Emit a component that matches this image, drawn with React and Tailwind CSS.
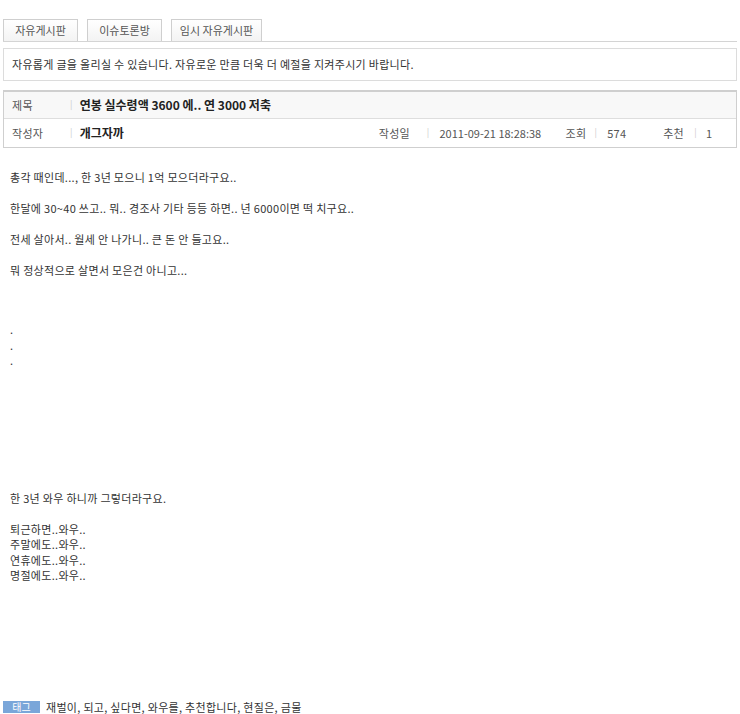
import React from "react";

const F = { fontFamily: '"Noto Sans CJK KR", "Noto Sans", sans-serif' };

export default function App() {
  return (
    <div className="w-[740px] h-[714px] overflow-hidden bg-white text-[11px] tracking-[0.3px] text-[#444]" style={F}>
      <div className="pt-[19px] px-[3px]">
        <div className="flex items-end gap-[9px] border-b border-[#d4d4d4]">
          <div className="w-[75px] h-[22px] flex items-center justify-center border border-b-0 border-[#cfcfcf] bg-gradient-to-b from-white to-[#f3f3f3] text-[#555] tracking-normal">자유게시판</div>
          <div className="w-[75px] h-[22px] flex items-center justify-center border border-b-0 border-[#cfcfcf] bg-gradient-to-b from-white to-[#f3f3f3] text-[#555] tracking-normal">이슈토론방</div>
          <div className="w-[91px] h-[22px] flex items-center justify-center border border-b-0 border-[#cfcfcf] bg-gradient-to-b from-white to-[#f3f3f3] text-[#555] tracking-normal">임시 자유게시판</div>
        </div>
        <div className="mt-[6px] h-[33px] border border-[#dcdcdc] flex items-center pl-[8px] text-[#333]">
          자유롭게 글을 올리실 수 있습니다. 자유로운 만큼 더욱 더 예절을 지켜주시기 바랍니다.
        </div>
        <div className="mt-[9px] border border-[#cfcfcf] border-t-2">
          <div className="h-[27px] bg-[#f8f8f8] border-b border-[#dedede] flex items-center">
            <div className="w-[66px] pl-[8px] text-[#555]">제목</div>
            <div className="text-[#ccc] text-[9px]">|</div>
            <div className="pl-[7px] text-[12px] font-bold text-[#222] tracking-normal">연봉 실수령액 3600 에.. 연 3000 저축</div>
          </div>
          <div className="h-[28px] flex items-center">
            <div className="w-[66px] pl-[8px] text-[#555]">작성자</div>
            <div className="text-[#ccc] text-[9px]">|</div>
            <div className="pl-[7px] text-[12px] font-bold text-[#222] w-[306px] tracking-normal">개그자까</div>
            <div className="w-[48px] text-[#555]">작성일</div>
            <div className="text-[#ccc] text-[9px]">|</div>
            <div className="pl-[10px] w-[136px] text-[#555] tracking-normal">2011-09-21 18:28:38</div>
            <div className="w-[29px] text-[#555]">조회</div>
            <div className="text-[#ccc] text-[9px]">|</div>
            <div className="pl-[10px] w-[66px] text-[#555]">574</div>
            <div className="w-[31px] text-[#555]">추천</div>
            <div className="text-[#ccc] text-[9px]">|</div>
            <div className="pl-[9px] text-[#555]">1</div>
          </div>
        </div>
      </div>
      <div className="pl-[10px] pt-[22px] text-[#333] leading-[15.5px]">
        <p className="h-[31px]">총각 때인데..., 한 3년 모으니 1억 모으더라구요..</p>
        <p className="h-[31px]">한달에 30~40 쓰고.. 뭐.. 경조사 기타 등등 하면.. 년 6000이면 떡 치구요..</p>
        <p className="h-[31px]">전세 살아서.. 월세 안 나가니.. 큰 돈 안 들고요..</p>
        <p className="h-[31px]">뭐 정상적으로 살면서 모은건 아니고...</p>
        <div className="h-[28px]"></div>
        <p>.</p>
        <p>.</p>
        <p>.</p>
        <div className="h-[122px]"></div>
        <p className="h-[31px]">한 3년 와우 하니까 그렇더라구요.</p>
        <p>퇴근하면..와우..</p>
        <p>주말에도..와우..</p>
        <p>연휴에도..와우..</p>
        <p>명절에도..와우..</p>
      </div>
      <div className="mt-[116px] pl-[3px] flex items-center gap-[6px] text-[#333] leading-[14px]">
        <span className="w-[37px] h-[12px] bg-[#7aa6d9] text-white text-[10px] leading-[12px] text-center tracking-normal">태그</span>
        <span>재벌이, 되고, 싶다면, 와우를, 추천합니다, 현질은, 금물</span>
      </div>
    </div>
  );
}
